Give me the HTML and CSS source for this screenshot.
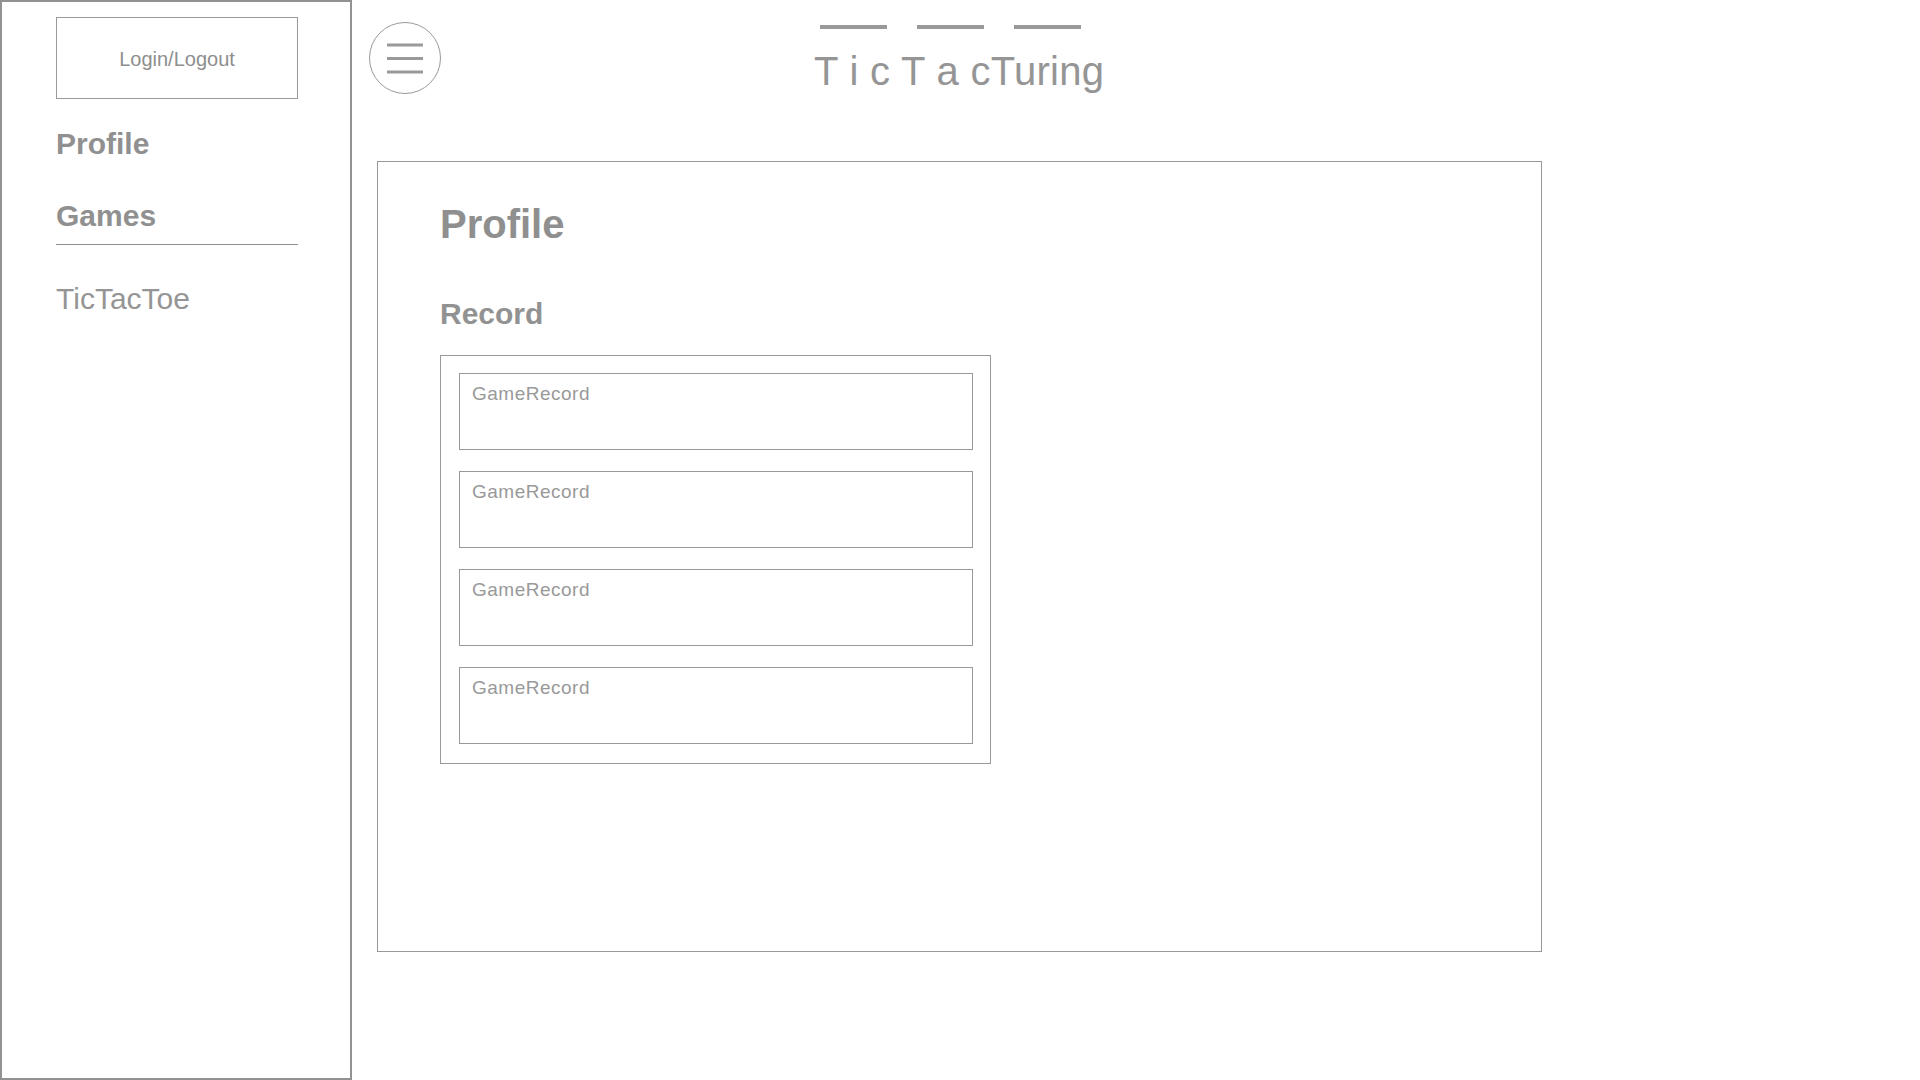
FILE: index.html
```html
<!DOCTYPE html>
<html lang="en">
<head>
<meta charset="utf-8">
<title>TicTacTuring</title>
<link rel="stylesheet" href="styles.css">
</head>
<body>
<div class="page">
  <aside class="sidebar">
    <div class="login">Login/Logout</div>
    <div class="nav-head nav-profile">Profile</div>
    <div class="nav-head nav-games">Games</div>
    <div class="divider"></div>
    <div class="nav-item">TicTacToe</div>
  </aside>
  <main class="main">
    <header class="header">
      <div class="burger">
        <svg width="72" height="72" viewBox="0 0 72 72">
          <circle cx="36" cy="36" r="35.5" fill="none" stroke="#9a9a9a" stroke-width="1"/>
          <line x1="18" y1="23" x2="54" y2="23" stroke="#999" stroke-width="3"/>
          <line x1="18" y1="36.5" x2="54" y2="36.5" stroke="#999" stroke-width="3"/>
          <line x1="18" y1="50" x2="54" y2="50" stroke="#999" stroke-width="3"/>
        </svg>
      </div>
      <div class="brand">
        <div class="dashes"><span class="dash"></span><span class="dash"></span><span class="dash"></span></div>
        <div class="title">T i c T a cTuring</div>
      </div>
    </header>
    <section class="card">
      <h1 class="card-title">Profile</h1>
      <h2 class="section-title">Record</h2>
      <div class="records">
        <div class="record">GameRecord</div>
        <div class="record">GameRecord</div>
        <div class="record">GameRecord</div>
        <div class="record">GameRecord</div>
      </div>
    </section>
  </main>
</div>
</body>
</html>
```

FILE: styles.css
```css
* { box-sizing: border-box; }
html, body {
  margin: 0;
  padding: 0;
  background: #fff;
}
body {
  font-family: "Liberation Sans", Arial, Helvetica, sans-serif;
  color: #929292;
  width: 1920px;
  height: 1080px;
  overflow: hidden;
}
.page {
  display: flex;
  width: 1920px;
  height: 1080px;
}
.sidebar {
  width: 352px;
  height: 1080px;
  flex: none;
  border: 2px solid #929292;
  padding: 15px 0 0 54px;
  display: flex;
  flex-direction: column;
}
.login {
  width: 242px;
  height: 82px;
  border: 1px solid #9a9a9a;
  display: flex;
  align-items: center;
  justify-content: center;
  font-size: 20px;
  color: #8e8e8e;
  padding-top: 3px;
}
.nav-head {
  font-size: 30px;
  line-height: 30px;
  font-weight: bold;
  color: #909090;
}
.nav-profile { margin-top: 30px; }
.nav-games { margin-top: 42px; }
.divider {
  width: 242px;
  height: 1px;
  background: #8e8e8e;
  margin-top: 13px;
}
.nav-item {
  margin-top: 39px;
  font-size: 30px;
  line-height: 30px;
  color: #959595;
}
.main {
  flex: 1;
  padding-left: 17px;
  display: flex;
  flex-direction: column;
}
.header {
  display: flex;
  align-items: flex-start;
  padding-top: 22px;
  height: 94px;
}
.burger {
  width: 72px;
  height: 72px;
  flex: none;
}
.burger svg { display: block; }
.brand {
  margin-left: 373px;
  padding-top: 3px;
  display: flex;
  flex-direction: column;
}
.dashes {
  display: flex;
  gap: 30px;
  margin-left: 6px;
}
.dash {
  display: block;
  width: 67px;
  height: 4px;
  background: #999;
}
.title {
  margin-top: 22px;
  font-size: 40px;
  line-height: 40px;
  letter-spacing: 0.3px;
  color: #959595;
  white-space: pre;
}
.card {
  margin-top: 67px;
  margin-left: 8px;
  width: 1165px;
  height: 791px;
  border: 1px solid #999;
  padding: 42px 0 0 62px;
}
.card-title {
  margin: 0;
  font-size: 40px;
  line-height: 40px;
  font-weight: bold;
  color: #8f8f8f;
}
.section-title {
  margin: 55px 0 0 0;
  font-size: 30px;
  line-height: 30px;
  font-weight: bold;
  color: #929292;
}
.records {
  margin-top: 26px;
  width: 551px;
  height: 409px;
  border: 1px solid #9a9a9a;
  padding: 17px 0 0 18px;
  display: flex;
  flex-direction: column;
  gap: 21px;
}
.record {
  width: 514px;
  height: 77px;
  border: 1px solid #999;
  padding: 9px 0 0 12px;
  font-size: 19px;
  line-height: 22px;
  letter-spacing: 0.5px;
  color: #999;
}
```
